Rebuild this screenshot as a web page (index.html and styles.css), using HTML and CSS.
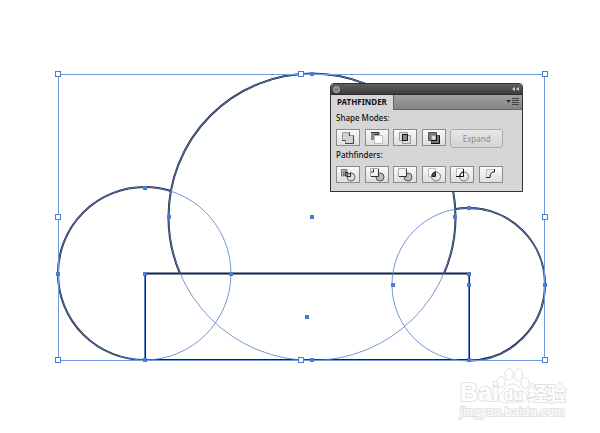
FILE: index.html
```html
<!DOCTYPE html>
<html lang="en">
<head>
<meta charset="utf-8">
<title>Pathfinder</title>
<link rel="stylesheet" href="styles.css">
</head>
<body>
<main class="workspace">
  <svg class="artboard" viewBox="0 0 600 433" role="img" aria-label="Artboard">
    <defs>
      <rect id="anchor" x="-2" y="-2" width="4" height="4"/>
      <rect id="handle" x="-2.5" y="-2.5" width="5" height="5"/>
    </defs>
    <g class="ink">
      <path d="M180 273.500A143.500 143.500 0 0 1 168.500 217A143.500 143.500 0 0 1 312 73.500A143.500 143.500 0 0 1 455.500 217A143.500 143.500 0 0 1 444 273.500"/>
      <path d="M144.500 360A86.500 86.500 0 0 1 58 273.500A86.500 86.500 0 0 1 144.500 187A86.500 86.500 0 0 1 171 191"/>
      <path d="M455.500 209A76.500 76.500 0 0 1 468.500 208A76.500 76.500 0 0 1 545 284.500A76.500 76.500 0 0 1 468.500 360.500"/>
      <path d="M145 273.500H469V360H145Z"/>
    </g>
    <g class="path">
      <circle cx="312" cy="217" r="143.500"/>
      <circle cx="144.500" cy="273.500" r="86.500"/>
      <circle cx="468.500" cy="284.500" r="76.500"/>
      <path d="M144.500 274V360M145 360.500H468.500M468.500 274V360"/>
      <path d="M145 274.500H468" opacity=".35"/>
    </g>
    <rect class="bounds" x="58.500" y="74.500" width="486" height="286"/>
    <g class="anchors">
      <use href="#anchor" x="312" y="74"/><use href="#anchor" x="312" y="217"/><use href="#anchor" x="169" y="217"/><use href="#anchor" x="455" y="217"/><use href="#anchor" x="312" y="360"/>
      <use href="#anchor" x="145" y="188"/><use href="#anchor" x="58" y="274"/><use href="#anchor" x="231" y="274"/><use href="#anchor" x="145" y="274"/><use href="#anchor" x="145" y="360"/>
      <use href="#anchor" x="469" y="208"/><use href="#anchor" x="469" y="274"/><use href="#anchor" x="469" y="285"/><use href="#anchor" x="393" y="285"/><use href="#anchor" x="545" y="285"/><use href="#anchor" x="469" y="360"/>
      <use href="#anchor" x="307" y="317"/>
    </g>
    <g class="handles">
      <use href="#handle" x="58" y="74"/><use href="#handle" x="301" y="74"/><use href="#handle" x="545" y="74"/>
      <use href="#handle" x="58" y="217"/><use href="#handle" x="545" y="217"/>
      <use href="#handle" x="58" y="360"/><use href="#handle" x="301" y="360"/><use href="#handle" x="545" y="360"/>
    </g>
    <g class="watermark">
      <text class="brand" x="460" y="401">Bai</text>
      <ellipse cx="501" cy="382" rx="4" ry="5.500"/><ellipse cx="509" cy="374.500" rx="4" ry="6"/><ellipse cx="518.500" cy="375" rx="4" ry="6"/><ellipse cx="525" cy="383" rx="4" ry="5.500"/>
      <path d="M512 384C506 384 505 390 501 393C496 397 499 403 505 403C509 403 509 402 513 402C517 402 519 403 522 402C528 401 529 396 524 392C520 389 519 384 512 384Z"/>
      <text class="du" x="504" y="400">du</text>
      <text class="cjk" x="528" y="401">经验</text>
      <text class="address" x="460" y="416">jingyan.baidu.com</text>
    </g>
  </svg>

  <section class="panel" aria-label="Pathfinder">
    <header class="titlebar">
      <button class="close" aria-label="Close"></button>
      <button class="collapse" aria-label="Collapse"><svg width="8" height="6" viewBox="0 0 8 6"><path d="M3 1V5L0 3ZM7 1V5L4 3Z"/></svg></button>
    </header>
    <div class="tabs">
      <button class="tab">PATHFINDER</button>
      <button class="menu" aria-label="Panel menu"><svg width="13" height="8" viewBox="0 0 13 8"><path d="M0 2H5L2.500 5Z"/><path d="M6 .5H13M6 2.500H13M6 4.500H13M6 6.500H13" stroke="#444" stroke-width="1"/></svg></button>
    </div>
    <div class="content">
      <h2>Shape Modes:</h2>
      <div class="tools">
        <button class="tool" aria-label="Unite"><svg viewBox="0 0 16 14"><path d="M2.500 1.500H9V4.500H13.500V12.500H5.500V9.500H2.500Z" fill="#d2d2d2" stroke="#999"/><path d="M5 12.500H13.500V4.500M9.500 5V1.500M2 9.500H5.500" fill="none" stroke="#444"/></svg></button>
        <button class="tool" aria-label="Minus Front"><svg viewBox="0 0 16 14"><path d="M2 1H10V4H5V9H2Z" fill="#888"/><path d="M2 1.500H10V3.500H5.500V9" fill="none" stroke="#333"/><path d="M5.500 4.500H13.500V12.500H5.500Z" fill="#fff" stroke="#bbb"/></svg></button>
        <button class="tool" aria-label="Intersect"><svg viewBox="0 0 16 14"><path d="M2.500 1.500H10.500V9.500H2.500ZM5.500 4.500H13.500V12.500H5.500Z" fill="#ddd" stroke="#999"/><path d="M5.500 3.500H10.500V9.500H5.500Z" fill="#888" stroke="#111"/></svg></button>
        <button class="tool" aria-label="Exclude"><svg viewBox="0 0 16 14"><path d="M2.500 1.500H10.500V4.500H13.500V12.500H5.500V9.500H2.500Z" fill="#777" stroke="#555"/><path d="M5.500 4.500H10V9H5.500Z" fill="#ddd" stroke="#999"/><path d="M5 12.500H13.500V4.500M10.500 4V9.500H5" fill="none" stroke="#111"/></svg></button>
        <button class="expand" disabled>Expand</button>
      </div>
      <h2>Pathfinders:</h2>
      <div class="tools">
        <button class="tool" aria-label="Divide"><svg viewBox="0 0 16 14"><path d="M1.500 1.500H7V3.500H3.500V8H1.500Z" fill="#bbb" stroke="#777"/><path d="M5 4.500H8V8H5Z" fill="#777" stroke="#333"/><circle cx="11" cy="9" r="4" fill="#ddd" stroke="#666"/><path d="M7 8.500H10.500V4.500" fill="none" stroke="#222"/></svg></button>
        <button class="tool" aria-label="Trim"><svg viewBox="0 0 16 14"><circle cx="11" cy="9" r="4" fill="#bbb" stroke="#555"/><path d="M1.500 .500H9.500V8.500H1.500Z" fill="#f4f4f4" stroke="#aaa"/><path d="M2 8.500H9.500V1M4.500 1V4H2" fill="none" stroke="#333"/></svg></button>
        <button class="tool" aria-label="Merge"><svg viewBox="0 0 16 14"><circle cx="11" cy="9" r="4" fill="#bbb" stroke="#555"/><path d="M1.500 .500H9.500V8.500H1.500Z" fill="#f4f4f4" stroke="#aaa"/><path d="M2 8.500H9.500V1" fill="none" stroke="#333"/></svg></button>
        <button class="tool" aria-label="Crop"><svg viewBox="0 0 16 14"><path d="M2.500 .500H9.500V8.500H2.500Z" fill="#fff" stroke="#bbb"/><circle cx="10" cy="8.500" r="4.500" fill="none" stroke="#777"/><path d="M9.500 4V8.500H6C6 6 7 4 9.500 4Z" fill="#555" stroke="#222"/></svg></button>
        <button class="tool" aria-label="Outline"><svg viewBox="0 0 16 14"><path d="M2.500 .500H9.500V8.500H2.500Z" fill="#fff" stroke="#bbb"/><circle cx="10" cy="8.500" r="4.500" fill="none" stroke="#777"/><path d="M2 8.500H9.500V1M6 8C6 6 7 4 9.500 4" fill="none" stroke="#111"/></svg></button>
        <button class="tool" aria-label="Minus Back"><svg viewBox="0 0 16 14"><path d="M3.500 9.500V1.500H11.500V4C8 4 7 6 7 9.500Z" fill="#eee" stroke="#bbb"/><path d="M3 9.500H7C7 6 8 4 11.500 4V1" fill="none" stroke="#222"/></svg></button>
      </div>
    </div>
  </section>
</main>
</body>
</html>
```
FILE: styles.css
```css
* { box-sizing: border-box; }
body { margin: 0; background: #fff; }
button { margin: 0; padding: 0; border: 0; font: inherit; color: inherit; background: none; }

.workspace { position: relative; font: 8px/12px "Noto Sans", "Open Sans", sans-serif; color: #111; }
.artboard { display: block; width: 100%; height: auto; }
.ink { fill: none; stroke: #1b2138; stroke-width: 2; }
.path { fill: none; stroke: #5d86cb; stroke-width: 1; }
.path circle { stroke-opacity: .85; }
.bounds { fill: none; stroke: #719be0; stroke-width: 1; }
.anchors { fill: #4a7bd3; }
.handles { fill: #fff; stroke: #4a7bd3; stroke-width: 1; }

.watermark { fill: #fff; stroke: #e2e2e2; stroke-width: 1; }
.watermark text { font-family: "Liberation Sans", "Noto Sans CJK SC", sans-serif; font-weight: bold; paint-order: stroke; stroke-width: 2; }
.watermark .brand { font-size: 25px; }
.watermark .du { font-size: 15px; }
.watermark .cjk { font-size: 19px; }
.watermark .address { font-size: 13px; font-weight: normal; }

.panel { position: absolute; top: 83px; left: 55%; width: 193px; border: 1px solid #333; border-radius: 4px 4px 0 0; background: #d6d6d6; overflow: hidden; }
.titlebar { display: flex; align-items: center; justify-content: space-between; height: 11px; padding: 0 2px; background: linear-gradient(#606060, #3b3b3b); border-bottom: 1px solid #292929; }
.close { width: 7px; height: 7px; border: 1px solid #bbb; border-radius: 50%; background: #808080; }
.collapse { display: flex; fill: #ccc; }
.tabs { display: flex; align-items: center; justify-content: space-between; height: 15px; padding-right: 3px; background: linear-gradient(#a0a0a0, #858585); border-bottom: 1px solid #666; }
.tab { height: 15px; padding: 0 6px; background: #d6d6d6; border-right: 1px solid #666; font-weight: 700; }
.menu { display: flex; fill: #333; }
.content { padding: 2px 5px 8px; }
h2 { margin: 0; font-size: 8px; font-weight: 500; line-height: 12px; }
.tools { display: grid; grid-template-columns: repeat(6, 24px); grid-template-rows: 17px; justify-content: space-between; align-items: start; width: 167px; margin-top: 5px; }
.tools + h2 { margin-top: 3px; }
.tool { display: flex; align-items: center; justify-content: center; width: 24px; height: 17px; border: 1px solid #8b8b8b; background: linear-gradient(#fafafa, #dedede); }
.tool svg { width: 16px; height: 14px; }
.expand { grid-column: span 2; height: 19px; border: 1px solid #aaa; border-radius: 3px; background: linear-gradient(#e6e6e6, #d4d4d4); color: #8b8b8b; }
```
